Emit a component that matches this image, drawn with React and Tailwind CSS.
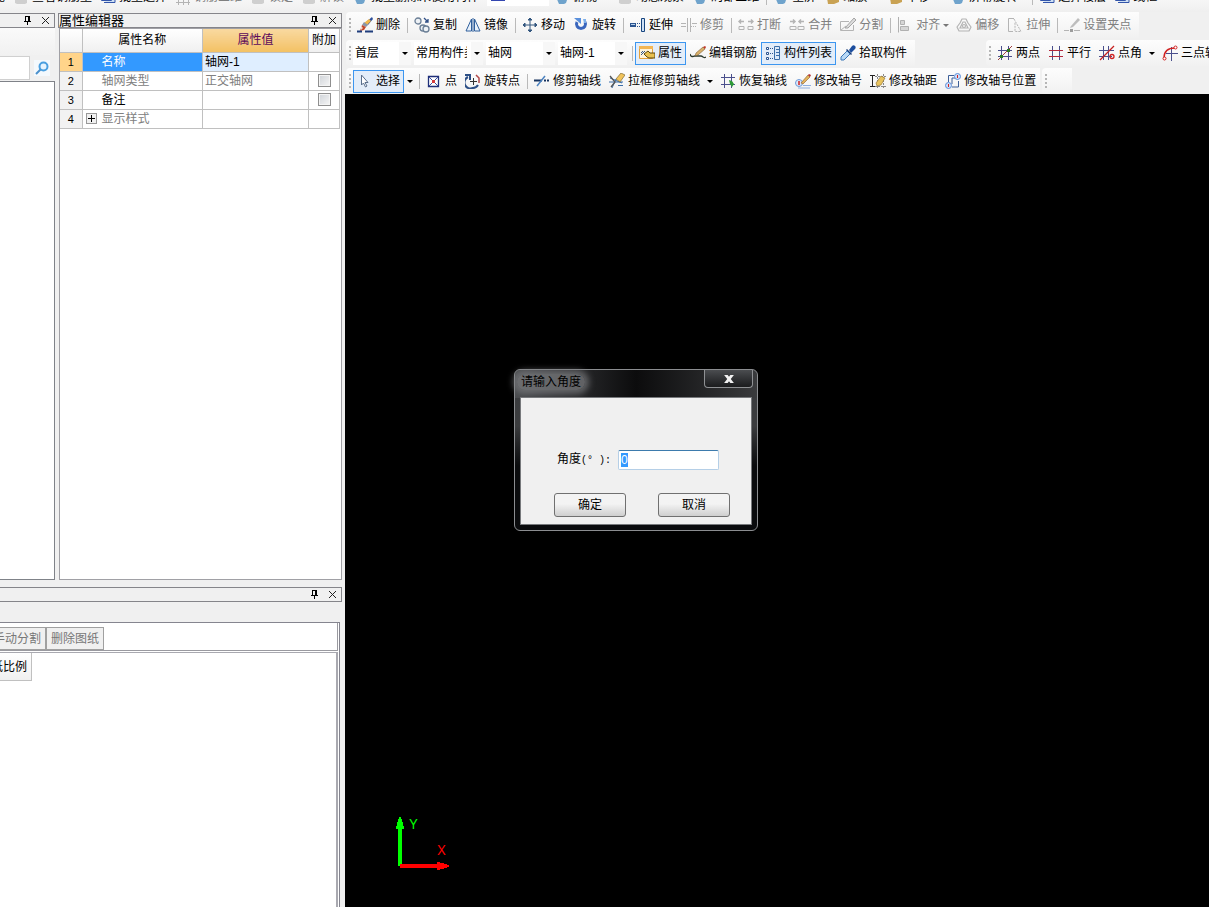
import { useEffect, useRef } from "react";

const B = "#2f4f86";

const icons = {
  brush: (
    <>
      <path d="M15 0l1 2-5 6-3-2z" fill="#2c4f9c" />
      <path d="M12 2l2 2-4 4-3-2z" fill="#f0b64a" />
      <path d="M7 5l4 3-2 2-4-2z" fill="#8a96a8" />
      <path d="M5 8l4 2-2 3-4 1z" fill="#c3482e" />
      <path d="M4 9l2 2-2 2z" fill="#f3d9c8" />
      <path d="M0 14.500h5M8 14.500h8" stroke="#1f3d7c" strokeWidth="2" />
    </>
  ),
  copy: (
    <g fill="#eef2f6" stroke="#6b7f96" strokeWidth="1.300">
      <circle cx="4" cy="4" r="3" />
      <circle cx="9" cy="11" r="3" />
      <circle cx="12" cy="12" r="3" />
      <path d="M10 1l4 4m0-3v3h-3" fill="none" stroke={B} />
    </g>
  ),
  mirror: <path d="M6.500 2v12H1zM9.500 2v12H15zM8 1v14" fill="#e8f1fb" stroke="#2f5f9c" />,
  move: (
    <g stroke="#33567f" fill="#33567f">
      <path d="M8 3v10M3 8h10" fill="none" />
      <path d="M8 1l2 2H6zM8 15l2-2H6zM1 8l2-2v4zM15 8l-2-2v4z" />
    </g>
  ),
  rotate: (
    <>
      <path d="M4 5a4.500 4.500 0 1 0 8 0" fill="none" stroke="#3a66bd" strokeWidth="3" />
      <path d="M1 1h7v6z" fill="#5a90dc" />
      <path d="M10 2h3v4h-2z" fill="#7fb0ea" />
    </>
  ),
  extend: (
    <>
      <path d="M0 6h6v4H0z" fill="#2c5590" />
      <path d="M1 7.500h4" stroke="#b9d2ee" />
      <path d="M7 6.500h3M7 9.500h3" stroke="#2c5590" strokeDasharray="1 1" />
      <path d="M11.500 1.500h3v13h-3z" fill="#cfe0f4" stroke="#17457f" />
    </>
  ),
  trim: (
    <g fill="none" stroke="#b4b4b4">
      <path d="M0 6.500h5M0 9.500h5M6.500 1v14M9.500 1v14M11 6.500h5" />
      <path d="M10 9.500h6" strokeDasharray="1 1" />
    </g>
  ),
  breakLine: (
    <g fill="none" stroke="#b4b4b4">
      <path d="M1 9.500h5v3H1zM10 9.500h5v3h-5z" />
      <path d="M1 4.500h5M3 2.500l-2 2 2 2M15 4.500h-5M13 2.500l2 2-2 2" strokeWidth="1.500" />
    </g>
  ),
  merge: (
    <g fill="none" stroke="#b4b4b4">
      <path d="M1 9.500h6v3H1zM9 9.500h6v3H9z" />
      <path d="M1 4.500h5M4 2.500l2 2-2 2M15 4.500h-5M12 2.500l-2 2 2 2" strokeWidth="1.500" />
    </g>
  ),
  split: (
    <g fill="none" stroke="#b4b4b4">
      <path d="M9 4.500H.5v9h13V8" />
      <path d="M5 11L14 1l2 2-8 8z" fill="#dcdcdc" stroke="#a5a5a5" />
      <path d="M1 13l5-4" />
    </g>
  ),
  align: (
    <g fill="#d5d5d5" stroke="#b0b0b0">
      <path d="M1.500 0v15.500" />
      <path d="M3.500 3.500h4v4h-4zM3.500 9.500h8v4h-8z" />
    </g>
  ),
  offset: (
    <g fill="none" stroke="#b4b4b4" strokeWidth="1.200">
      <path d="M6 2h4l2 4 3 4-2 4H3l-2-4 3-4z" strokeLinejoin="round" />
      <path d="M7 5h2l2 4 1 2H4l1-2z" />
      <circle cx="8" cy="9" r="1.500" />
    </g>
  ),
  stretch: (
    <g fill="none" stroke="#b4b4b4">
      <path d="M7 1.500H1.500v13H6" />
      <path d="M7 2l7 12.500H8V5" strokeDasharray="2 1" />
    </g>
  ),
  grip: (
    <>
      <path d="M7 9L14 1l2 2-7 7-3 1z" fill="#bdbdbd" />
      <path d="M0 13.500h5M10 13.500h6" stroke="#b4b4b4" />
      <path d="M6 12h3v3H6z" fill="#9d9d9d" />
    </>
  ),
  props: (
    <>
      <path d="M.5 1.500h13v12H.5z" fill="#fff3d8" stroke="#e3a13c" />
      <path d="M0 1h14v3H0z" fill="#f2b655" />
      <path d="M2 10l4-4M2 8l2-2" stroke="#2c5590" />
      <path d="M5 9l4-3 2 2h5v5h-6l-2-1z" fill="#e8c04f" stroke="#5b4713" />
    </>
  ),
  rebar: (
    <>
      <path d="M0 9c1 4 3 2 5 2h6c2 0 3 3 5 1" fill="none" stroke="#2d3a2d" strokeWidth="1.300" />
      <path d="M6 8L13 2l2 2-7 6-3 1z" fill="#d8b06a" stroke="#6a4a22" strokeWidth=".5" />
      <path d="M13 2l2-1 1 1-1 2z" fill="#c0392b" />
    </>
  ),
  list: (
    <>
      <path d="M1.500 2.500h2v2h-2zM1.500 7.500h2v2h-2zM1.500 12.500h2v2h-2z" fill="#fff" stroke="#2c5590" />
      <path d="M5 3.500h3M5 8.500h3M5 13.500h3" stroke="#2c5590" strokeDasharray="1 1" />
      <path d="M9.500 1.500h5v13h-5z" fill="#dce9f8" stroke="#3c6ea8" />
      <path d="M11 4.500h3M11 7.500h3M11 10.500h3" stroke="#3c6ea8" />
    </>
  ),
  picker: (
    <>
      <path d="M9 5l3-4c2-2 5 1 3 3l-4 4z" fill="#1e4f9e" />
      <path d="M7 4l5 5-1 1-5-5z" fill="#173b78" />
      <path d="M7 6l3 3-6 6H1v-3z" fill="#b8d8f5" stroke="#3c78b8" />
    </>
  ),
  twoPoint: (
    <>
      <path d="M4.500 1v14M11.500 1v14M1 5.500h14M1 11.500h14" stroke="#4a4f8c" />
      <path d="M1 15L15 1" stroke="#a04040" />
      <path d="M3 10h3v3H3zM10 4h3v3h-3z" fill="#2b7a20" />
    </>
  ),
  parallel: (
    <>
      <path d="M4.500 1v14M11.500 1v14" stroke="#4a4f8c" />
      <path d="M1 5.500h14M1 11.500h14" stroke="#b3283c" />
    </>
  ),
  angle: (
    <>
      <path d="M4.500 1v14M9.500 1v14M0 5.500h15M0 11.500h13" stroke="#4a4f8c" />
      <path d="M1 15L15 1" stroke="#c62020" strokeWidth="1.300" />
      <circle cx="13" cy="11.500" r="2" fill="none" stroke="#d02020" strokeWidth="1.300" />
    </>
  ),
  arc: (
    <>
      <path d="M9.500 2v14M4 8.500h12" stroke="#4a4f8c" />
      <path d="M2 13C2 6 6 3 13 3" fill="none" stroke="#d02020" strokeWidth="1.500" />
      <circle cx="2.500" cy="13.500" r="1.500" fill="#fff" stroke="#d02020" />
      <circle cx="13.500" cy="2.500" r="1.500" fill="#fff" stroke="#d02020" />
    </>
  ),
  cursor: <path d="M4.500 2v10l2-2 2 4 1.500-1-2-3.500H11z" fill="#fff" stroke="#5a6f8c" />,
  point: (
    <>
      <path d="M2.500 3.500h10v10h-10z" fill="#fff" stroke="#1f2f78" strokeWidth="1.300" />
      <path d="M3 4l9 9M12 4l-9 9" stroke="#3b4fa0" />
      <path d="M6 7h3v3H6z" fill="#d43c3c" />
    </>
  ),
  rotatePoint: (
    <>
      <path d="M3 4a6 6 0 0 0 5 11 6 6 0 0 0 5-3" fill="none" stroke="#2c4f86" strokeWidth="2" />
      <path d="M0 2h5v5" fill="none" stroke="#2c4f86" strokeWidth="2" />
      <path d="M8.500 5v7M5 8.500h7" stroke="#333" />
      <path d="M11 2l3 3v5" fill="none" stroke="#b34848" strokeWidth="1.500" />
    </>
  ),
  trimAxis: (
    <>
      <path d="M0 7.500h8" stroke="#16335f" strokeWidth="2" />
      <path d="M3 13L11 3" stroke="#4b82c0" strokeWidth="1.500" />
      <path d="M10 7.500h6" stroke="#16335f" strokeWidth="2" strokeDasharray="2 1" />
    </>
  ),
  boxTrim: (
    <>
      <path d="M1 5l12 5M3 15l4-9M0 9h14M9 12.500h5" stroke="#3c6ea8" />
      <path d="M1 3l5 6-4 5" fill="none" stroke="#555" strokeWidth="1.300" />
      <path d="M7 6l5-6 4 2-5 7z" fill="#f1c35a" stroke="#7d6a36" strokeWidth=".7" />
    </>
  ),
  restore: (
    <>
      <path d="M4.500 1v14M11.500 1v14M1 4.500h14M1 11.500h14" stroke="#4a4f8c" />
      <path d="M9 7l3 1 2 3-2 3-2-3z" fill="#2d9a36" />
    </>
  ),
  axisNo: (
    <>
      <circle cx="4" cy="10" r="3.500" fill="#dce9fb" stroke="#6f9bd8" />
      <path d="M8 12.500h8M3 15h12" stroke="#8fb0e0" />
      <path d="M6 10l7-8 2 2-7 7z" fill="#e3b45c" stroke="#8a5a28" strokeWidth=".6" />
      <path d="M13 2l1-1 2 1-1 2z" fill="#b83030" />
      <path d="M4 8v4" stroke="#d02020" strokeWidth="1.500" />
    </>
  ),
  axisGap: (
    <>
      <path d="M2.500 2v12M0 2.500h5M0 13.500h5" stroke="#222" />
      <path d="M7.500 1v14M13.500 1v14M5 3.500h11M5 13.500h11" stroke="#888" strokeDasharray="2 1" />
      <path d="M6 10l5-7 4 2-4 7-4 1z" fill="#e8c35e" stroke="#8a6a28" strokeWidth=".6" />
    </>
  ),
  axisPos: (
    <>
      <path d="M3.500 9V2.500H9M13.500 8v6H7M7 11V5h4" fill="none" stroke="#3d5f98" />
      <circle cx="12.500" cy="3.500" r="3" fill="#cfe0fa" stroke="#5f8fd8" />
      <circle cx="3.500" cy="12.500" r="3" fill="#cfe0fa" stroke="#5f8fd8" />
      <path d="M12.500 2v3M3.500 11v3" stroke="#d02020" />
    </>
  ),
  page: <path d="M1.500 1.500h10v10h-10zM4 13.500h11V5" fill="#cfe0f4" stroke="#3355aa" />,
  grayBlock: <path d="M2 6h12v8l-2 1H4l-2-1z" fill="#cfcfcf" />,
  grayGrid: <path d="M1 13.500h14M3.500 9v7M8.500 9v7M13.500 9v7" stroke="#b4b4b4" />,
  sphere: <path d="M2 8h12l-2 6-2 1H5z" fill="#6fa3cc" />,
  gold: <path d="M3 9h12v4l-5 2H4z" fill="#c9a253" />,
};

function Icon({ name }) {
  return (
    <svg className="h-4 w-4 shrink-0" viewBox="0 0 16 16" aria-hidden="true">
      {icons[name]}
    </svg>
  );
}

function Tool({ icon, children, active, disabled }) {
  return (
    <button
      type="button"
      disabled={disabled}
      className={`flex h-[23px] shrink-0 items-center gap-[3px] border px-[3px] whitespace-nowrap ${
        active ? "border-[#3c96f0] bg-[#e3edf9]" : "border-transparent"
      } ${disabled ? "text-[#808080]" : "text-black"}`}
    >
      <Icon name={icon} />
      {children}
    </button>
  );
}

function Caret({ dim }) {
  return (
    <button type="button" aria-label="更多" className="flex w-3 shrink-0 items-center justify-center">
      <svg className="h-[3px] w-[6px]" viewBox="0 0 6 3">
        <path d="M0 0h6L3 3z" fill={dim ? "#777" : "#000"} />
      </svg>
    </button>
  );
}

const Sep = () => <span className="mr-[2px] ml-[3px] h-[15px] w-px shrink-0 bg-[#b9b9b9]" />;

function Grip() {
  return (
    <span className="flex w-[7px] shrink-0 flex-col items-center gap-[2px]">
      {[0, 1, 2, 3].map((i) => (
        <span key={i} className="h-[2px] w-[2px] bg-[#b5b5b5]" />
      ))}
    </span>
  );
}

function Bar({ children, className = "" }) {
  return (
    <div className={`flex h-[26px] shrink-0 items-center rounded-l-sm bg-linear-to-b from-[#fdfdfd] to-[#f1f1f1] ${className}`}>
      {children}
    </div>
  );
}

function Combo({ label, value, className }) {
  return (
    <div className={`grid h-[23px] shrink-0 grid-cols-[1fr_12px] items-center bg-white ${className}`}>
      <select
        aria-label={label}
        className="col-span-2 col-start-1 row-start-1 h-full w-full appearance-none overflow-hidden bg-transparent pr-4 pl-[2px] outline-none"
      >
        <option>{value}</option>
      </select>
      <span className="pointer-events-none col-start-2 row-start-1 flex h-full items-center justify-center bg-[#f7f7f7]">
        <svg className="h-[3px] w-[6px]" viewBox="0 0 6 3">
          <path d="M0 0h6L3 3z" />
        </svg>
      </span>
    </div>
  );
}

function TopStrip() {
  return (
    <header className="flex h-3 shrink-0 items-end overflow-hidden bg-linear-to-b from-[#f6f6f6] to-[#efefef] pb-[3px]">
      <div className="flex h-6 items-center">
        <span className="flex w-[9px] justify-end overflow-hidden pr-1 whitespace-nowrap">图元</span>
        <Tool icon="grayBlock">查看钢筋量</Tool>
        <Tool icon="page">批量选择</Tool>
        <Tool icon="grayGrid" disabled>钢筋三维</Tool>
        <Tool icon="grayBlock" disabled>锁定</Tool>
        <Tool icon="grayBlock" disabled>解锁</Tool>
        <Tool icon="sphere">批量删除未使用构件</Tool>
        <span className="mr-px ml-1 flex h-[18px] w-[62px] items-end bg-white pl-1">
          <span className="mb-[5px] h-2 w-[14px] bg-[#3346b0]" />
        </span>
        <Tool icon="sphere">俯视</Tool>
        <Caret />
        <Tool icon="grayBlock">动态观察</Tool>
        <Tool icon="sphere">局部三维</Tool>
        <Sep />
        <Tool icon="sphere">全屏</Tool>
        <Tool icon="gold">缩放</Tool>
        <Caret />
        <Tool icon="gold">平移</Tool>
        <Caret />
        <Tool icon="sphere">屏幕旋转</Tool>
        <span className="w-2" />
        <Sep />
        <Tool icon="page">选择楼层</Tool>
        <Tool icon="page">线框</Tool>
      </div>
    </header>
  );
}

function Toolbars() {
  return (
    <div className="flex shrink-0 flex-col gap-[2px] overflow-hidden pl-px">
      <Bar className="w-fit pr-1">
        <Grip />
        <Tool icon="brush">删除</Tool>
        <Sep />
        <Tool icon="copy">复制</Tool>
        <Tool icon="mirror">镜像</Tool>
        <Sep />
        <Tool icon="move">移动</Tool>
        <Tool icon="rotate">旋转</Tool>
        <Sep />
        <Tool icon="extend">延伸</Tool>
        <Tool icon="trim" disabled>修剪</Tool>
        <Sep />
        <Tool icon="breakLine" disabled>打断</Tool>
        <Tool icon="merge" disabled>合并</Tool>
        <Tool icon="split" disabled>分割</Tool>
        <Sep />
        <Tool icon="align" disabled>对齐</Tool>
        <span className="-ml-1 flex h-4">
          <Caret dim />
        </span>
        <Tool icon="offset" disabled>偏移</Tool>
        <Tool icon="stretch" disabled>拉伸</Tool>
        <Sep />
        <Tool icon="grip" disabled>设置夹点</Tool>
      </Bar>
      <div className="flex">
        <Bar className="pr-1">
          <Grip />
          <div className="mr-[2px] flex gap-[3px]">
            <Combo label="楼层" value="首层" className="w-[58px]" />
            <Combo label="构件分类" value="常用构件类" className="w-[69px]" />
            <Combo label="构件类型" value="轴网" className="w-[69px]" />
            <Combo label="构件" value="轴网-1" className="w-[69px]" />
          </div>
          <Sep />
          <Tool icon="props" active>属性</Tool>
          <Tool icon="rebar">编辑钢筋</Tool>
          <Tool icon="list" active>构件列表</Tool>
          <Tool icon="picker">拾取构件</Tool>
        </Bar>
        <Bar className="ml-[71px] flex-1">
          <Grip />
          <Tool icon="twoPoint">两点</Tool>
          <Tool icon="parallel">平行</Tool>
          <Tool icon="angle">点角</Tool>
          <Caret />
          <Tool icon="arc">三点辅轴</Tool>
        </Bar>
      </div>
      <div className="flex gap-[2px]">
        <Bar>
          <Grip />
          <Tool icon="cursor" active>选择</Tool>
          <Caret />
          <Sep />
          <Tool icon="point">点</Tool>
          <Tool icon="rotatePoint">旋转点</Tool>
          <Sep />
          <Tool icon="trimAxis">修剪轴线</Tool>
          <Tool icon="boxTrim">拉框修剪轴线</Tool>
          <Caret />
          <Tool icon="restore">恢复轴线</Tool>
          <Tool icon="axisNo">修改轴号</Tool>
          <Tool icon="axisGap">修改轴距</Tool>
          <Tool icon="axisPos">修改轴号位置</Tool>
        </Bar>
        <Bar className="w-[30px]">
          <Grip />
        </Bar>
      </div>
    </div>
  );
}

function PanelHeader({ title, className = "" }) {
  return (
    <div className={`flex h-[15px] shrink-0 items-center border border-[#85858a] bg-[#f0f0f0] ${className}`}>
      <h2 className="flex-1 text-[13px] leading-[12px] whitespace-nowrap">{title}</h2>
      <button type="button" aria-label="固定" className="mr-[9px]">
        <svg className="h-[9px] w-[9px]" viewBox="0 0 9 9" shapeRendering="crispEdges">
          <path d="M2 0h5v5H2zM1 5h7v1H1zM4 6h1v3H4z" />
          <path d="M3 1h2v4H3z" fill="#f0f0f0" />
        </svg>
      </button>
      <button type="button" aria-label="关闭" className="mr-1">
        <svg className="h-[9px] w-[9px]" viewBox="0 0 9 9">
          <path d="M1 1l7 7M8 1L1 8" stroke="#222" />
        </svg>
      </button>
    </div>
  );
}

function SearchPanel() {
  return (
    <section className="flex w-[55px] shrink-0 flex-col">
      <PanelHeader className="border-l-0" />
      <div className="h-[27px] bg-linear-to-b from-[#fafafa] to-[#f1f1f1]" />
      <div className="flex h-[26px] items-center">
        <input aria-label="搜索构件" className="h-6 w-[30px] border border-l-0 border-[#d0d0d0] bg-white outline-none" />
        <button type="button" aria-label="搜索" className="ml-1 flex h-4 w-4 items-center justify-center bg-[#f4f9fd]">
          <svg className="h-[14px] w-[14px]" viewBox="0 0 14 14">
            <circle cx="8.500" cy="5.500" r="4" fill="#e6f4ff" stroke="#4a9fe0" strokeWidth="2" />
            <path d="M5.500 8.500L1 13" stroke="#4a90cc" strokeWidth="2" />
          </svg>
        </button>
      </div>
      <div className="flex-1 border border-l-0 border-[#7f8288] bg-white" />
    </section>
  );
}

const rows = [
  { name: "名称", value: "轴网-1", selected: true },
  { name: "轴网类型", value: "正交轴网", gray: true, check: true },
  { name: "备注", value: "", check: true },
  { name: "显示样式", value: "", gray: true, expand: true },
];

function PropertyPanel() {
  return (
    <section className="flex flex-1 flex-col">
      <PanelHeader title="属性编辑器" />
      <div className="ml-px flex-1 border border-[#a0a0a5] bg-white pr-px">
        <table className="w-full table-fixed border-collapse">
          <colgroup>
            <col className="w-[22px]" />
            <col />
            <col className="w-[106px]" />
            <col className="w-[31px]" />
          </colgroup>
          <thead>
            <tr className="h-[23px] bg-linear-to-b from-white to-[#f0f0f0]">
              <th className="border-r border-b border-[#c0c0c0] p-0" />
              <th className="border-r border-b border-[#c0c0c0] p-0 font-normal">属性名称</th>
              <th className="border-r border-b border-[#c0c0c0] bg-linear-to-b from-[#f9d9a0] to-[#f3c163] p-0 font-normal text-[#5b0a5b]">
                属性值
              </th>
              <th className="border-r border-b border-[#c0c0c0] p-0 font-normal whitespace-nowrap">附加</th>
            </tr>
          </thead>
          <tbody>
            {rows.map((row, i) => (
              <tr key={row.name} className={`h-[19px] ${row.gray ? "text-[#808080]" : "text-black"}`}>
                <th
                  className={`border-r border-b border-[#c0c0c0] p-0 text-center text-[11px] font-normal text-black ${
                    row.selected ? "bg-[#ffd48a]" : "bg-[#f2f2f2]"
                  }`}
                >
                  {i + 1}
                </th>
                <td className={`border-r border-b border-[#c0c0c0] p-0 ${row.selected ? "bg-[#3399ff] text-white" : ""}`}>
                  <div className="flex items-center">
                    <span className="flex w-[19px] pl-[3px]">
                      {row.expand && (
                        <button type="button" aria-label="展开" className="h-[11px] w-[11px] border border-[#999] bg-[#f0f0f0]">
                          <svg className="h-[9px] w-[9px]" viewBox="0 0 9 9">
                            <path d="M4.500 1v7M1 4.500h7" stroke="#000" />
                          </svg>
                        </button>
                      )}
                    </span>
                    <span className="leading-[18px]">{row.name}</span>
                  </div>
                </td>
                <td className={`border-r border-b border-[#c0c0c0] p-0 pl-[2px] leading-[18px] ${row.selected ? "bg-[#dfeeff]" : ""}`}>
                  {row.value}
                </td>
                <td className="border-r border-b border-[#c0c0c0] p-0">
                  {row.check && (
                    <input
                      type="checkbox"
                      aria-label={`附加 ${row.name}`}
                      className="mx-auto block h-[13px] w-[13px] appearance-none border border-[#8f8f8f] bg-linear-to-br from-[#cfd3d8] to-[#f6f6f6] shadow-[inset_0_0_0_1px_#f4f4f4]"
                    />
                  )}
                </td>
              </tr>
            ))}
          </tbody>
        </table>
      </div>
    </section>
  );
}

function DrawingPanel() {
  return (
    <section className="flex min-h-0 flex-col pt-1 pr-[3px]">
      <PanelHeader className="border-l-0" />
      <div className="mt-5 mr-[2px] flex flex-1 flex-col border-t border-r border-[#85858f] bg-white pr-px">
        <div className="flex h-7 items-end overflow-hidden border-r border-b border-[#9a9aa0] pt-1">
          <div className="-ml-3 flex">
            <button type="button" className="h-[23px] border border-[#a0a0a0] bg-[#f0f0f0] px-1 whitespace-nowrap text-[#777]">
              手动分割
            </button>
            <button type="button" className="h-[23px] border border-[#a0a0a0] bg-[#f0f0f0] px-1 whitespace-nowrap text-[#777]">
              删除图纸
            </button>
          </div>
        </div>
        <div className="mt-px flex-1 overflow-hidden border-t border-r-2 border-[#a9a9b0]">
          <div className="-ml-3 flex h-7 w-11 items-center justify-end border-r border-b border-[#c0c0c0] bg-linear-to-b from-white to-[#f0f0f0] pr-1 whitespace-nowrap">
            图纸比例
          </div>
        </div>
      </div>
    </section>
  );
}

function AngleDialog() {
  const input = useRef(null);

  useEffect(() => {
    input.current?.focus();
    input.current?.select();
  }, []);

  return (
    <form
      role="dialog"
      aria-labelledby="angle-title"
      onSubmit={(e) => e.preventDefault()}
      className="absolute top-[275px] left-[169px] flex h-[162px] w-[244px] flex-col rounded-md border border-[#8b8d90] bg-linear-to-b from-[#3a3c3f] from-0% via-[#3b3c3e] via-35% to-[#0a0b0d] to-60% px-[6px] pb-[6px]"
    >
      <div className="-mx-[6px] flex h-7 items-start justify-between rounded-t-md bg-linear-to-r from-[#4a4c4f] via-[#0c0c0d] to-[#3a3b3d] pr-1">
        <h1
          id="angle-title"
          className="mt-1 ml-[2px] rounded-full bg-[#7a7c7f]/70 px-1 leading-4 text-black shadow-[0_0_6px_4px_rgba(122,124,127,0.7)]"
        >
          请输入角度
        </h1>
        <button
          type="button"
          aria-label="关闭"
          className="flex h-[18px] w-[49px] items-center justify-center rounded-b border border-t-0 border-[#8f9194] bg-linear-to-b from-[#4b4d50] to-[#1b1c1e]"
        >
          <svg className="h-2 w-[10px]" viewBox="0 0 11 9">
            <path d="M0 0h4l1.500 2L7 0h4L7.500 4.500 11 9H7L5.500 7 4 9H0l3.500-4.500z" fill="#f2f2f2" />
          </svg>
        </button>
      </div>
      <div className="flex flex-1 flex-col items-center justify-end gap-[23px] bg-[#f0f0f0] pb-[7px] outline outline-[#77797c]">
        <div className="flex items-center gap-2 pl-1">
          <label htmlFor="angle" className="w-[53px] whitespace-pre">
            角度<span className="font-['Liberation_Mono',monospace] text-[10px]">(° ):</span>
          </label>
          <input
            id="angle"
            ref={input}
            defaultValue="0"
            className="h-5 w-[101px] rounded-xs border border-[#b5cfe7] border-t-[#3d7bad] bg-white px-[2px] outline-none selection:bg-[#3399ff] selection:text-white"
          />
        </div>
        <div className="flex gap-8 pl-3">
          <button type="submit" className="h-6 w-[72px] rounded-[3px] border border-[#707070] bg-linear-to-b from-[#f3f3f3] from-45% to-[#cfcfcf]">
            确定
          </button>
          <button type="button" className="h-6 w-[72px] rounded-[3px] border border-[#707070] bg-linear-to-b from-[#f3f3f3] from-45% to-[#cfcfcf]">
            取消
          </button>
        </div>
      </div>
    </form>
  );
}

function Axes() {
  return (
    <svg className="absolute bottom-[35px] left-[50px] h-[60px] w-[60px]" viewBox="0 0 60 60" shapeRendering="crispEdges">
      <path d="M3 54V17H1v-3h1v-4h1V7h1V5h2v2h1v3h1v4h1v3H7v37z" fill="#00ff00" />
      <path d="M5 52h37v-2h3v1h4v1h3v1h2v2h-2v1h-3v1h-4v1h-3v-2H5z" fill="#ff0000" />
      <text x="14" y="17" className="font-[Inter] text-[13px] font-normal" fill="#00ff00">Y</text>
      <text x="42" y="43" className="font-[Inter] text-[13px] font-normal" fill="#ff0000">X</text>
    </svg>
  );
}

export default function App() {
  return (
    <div className="flex h-screen min-h-[600px] flex-col overflow-hidden bg-[#f0f0f0] font-['Liberation_Sans','Noto_Sans_CJK_SC',sans-serif] text-[12px] leading-4 text-black">
      <TopStrip />
      <div className="flex min-h-0 flex-1">
        <aside className="grid w-[345px] shrink-0 grid-rows-[571fr_324fr]">
          <div className="flex min-h-0 gap-[3px] pt-px pr-[3px] pb-[3px]">
            <SearchPanel />
            <PropertyPanel />
          </div>
          <DrawingPanel />
        </aside>
        <div className="flex min-w-0 flex-1 flex-col">
          <Toolbars />
          <main className="relative flex-1 overflow-hidden bg-black">
            <Axes />
            <AngleDialog />
          </main>
        </div>
      </div>
    </div>
  );
}
